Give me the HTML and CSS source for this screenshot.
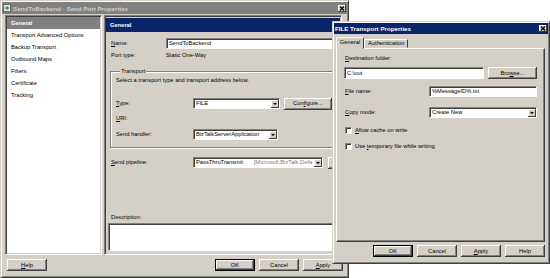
FILE: index.html
```html
<!DOCTYPE html>
<html lang="en">
<head>
    <meta charset="UTF-8">
    <meta name="viewport" content="width=device-width, initial-scale=1.0">
    <title>SendToBackend - Send Port Properties</title>
    <link rel="stylesheet" href="styles.css">
</head>
<body>
    <div class="win back">
        <div class="titlebar">
            <svg class="app-icon" width="8" height="8" viewBox="0 0 8 8">
                <rect x="0.5" y="0.5" width="7" height="7" fill="#e8e8e8" stroke="#6a6a6a"/>
                <path d="M1.5 4 H5 M3.5 2.5 L5.5 4 L3.5 5.5" stroke="#2e8b3a" stroke-width="1.2" fill="none"/>
            </svg>
            <span class="title">SendToBackend - Send Port Properties</span>
            <span class="close">
                <svg width="6" height="5" viewBox="0 0 6 5"><path d="M1 0.5 L5 4.5 M5 0.5 L1 4.5" stroke="#000" stroke-width="1.2"/></svg>
            </span>
        </div>
        <div class="main">
            <ul class="nav sunken">
                <li class="selected">General</li>
                <li>Transport Advanced Options</li>
                <li>Backup Transport</li>
                <li>Outbound Maps</li>
                <li>Filters</li>
                <li>Certificate</li>
                <li>Tracking</li>
            </ul>
            <div class="pane sunken">
                <div class="pane-head">General</div>
                <div class="form">
                    <div class="row name-row">
                        <span class="lbl w55"><u>N</u>ame:</span>
                        <div class="field name-field">SendToBackend</div>
                    </div>
                    <div class="row port-row">
                        <span class="lbl w55">Port type:</span>
                        <span>Static One-Way</span>
                    </div>
                    <fieldset class="group">
                        <legend>Transport</legend>
                        <p class="hint">Select a transport type and transport address below.</p>
                        <div class="row type-row">
                            <span class="lbl w77"><u>T</u>ype:</span>
                            <div class="field select type-select"><span>FILE</span><span class="arrow"></span></div>
                            <div class="btn configure">Con<u>f</u>igure...</div>
                        </div>
                        <div class="row uri-row">
                            <span class="lbl w77"><u>U</u>RI:</span>
                        </div>
                        <div class="row handler-row">
                            <span class="lbl w77">Send handler:</span>
                            <div class="field select handler-select"><span>BizTalkServerApplication</span><span class="arrow"></span></div>
                        </div>
                    </fieldset>
                    <div class="row pipeline-row">
                        <span class="lbl w82"><u>S</u>end pipeline:</span>
                        <div class="field select pipeline-select">
                            <span>PassThruTransmit</span>
                            <span class="muted">[Microsoft.BizTalk.Defa</span>
                            <span class="arrow"></span>
                        </div>
                        <div class="btn small"></div>
                    </div>
                    <div class="desc-label">Description:</div>
                    <div class="field desc"></div>
                </div>
            </div>
        </div>
        <div class="footer">
            <div class="btn"><u>H</u>elp</div>
            <div class="spacer"></div>
            <div class="btn default">OK</div>
            <div class="btn">Cancel</div>
            <div class="btn"><u>A</u>pply</div>
        </div>
    </div>

    <div class="win front">
        <div class="titlebar">
            <span class="title">FILE Transport Properties</span>
            <span class="close">
                <svg width="6" height="5" viewBox="0 0 6 5"><path d="M1 0.5 L5 4.5 M5 0.5 L1 4.5" stroke="#000" stroke-width="1.2"/></svg>
            </span>
        </div>
        <div class="tabs">
            <div class="tab active">General</div>
            <div class="tab">Authentication</div>
        </div>
        <div class="tab-panel">
            <div class="dest-label"><u>D</u>estination folder:</div>
            <div class="row dest-row">
                <div class="field dest-field">C:\out</div>
                <div class="btn browse">Bro<u>w</u>se...</div>
            </div>
            <div class="row file-row">
                <span class="lbl w84"><u>F</u>ile name:</span>
                <div class="field file-field">%MessageID%.txt</div>
            </div>
            <div class="row copy-row">
                <span class="lbl w84"><u>C</u>opy mode:</span>
                <div class="field select file-field"><span>Create New</span><span class="arrow"></span></div>
            </div>
            <div class="check-row first">
                <span class="check"></span>
                <span><u>A</u>llow cache on write</span>
            </div>
            <div class="check-row">
                <span class="check"></span>
                <span>Use <u>t</u>emporary file while writing</span>
            </div>
        </div>
        <div class="footer front-footer">
            <div class="btn default">OK</div>
            <div class="btn">Cancel</div>
            <div class="btn"><u>A</u>pply</div>
            <div class="btn">Help</div>
        </div>
    </div>
</body>
</html>
```

FILE: styles.css
```css
*{
    padding: 0;
    margin: 0;
    box-sizing: border-box;
}
body {
    width: 550px;
    height: 278px;
    overflow: hidden;
    position: relative;
    background: #fff;
    color: #000;
    font-family: "Liberation Sans", Arial, sans-serif;
    font-size: 5.75px;
    line-height: 7px;
}
u {
    text-decoration-thickness: 0.5px;
}

/* windows */
.win {
    position: absolute;
    display: flex;
    flex-direction: column;
    padding: 1px;
    background: #d4d0c8;
    border: 1px solid;
    border-color: #d4d0c8 #404040 #404040 #d4d0c8;
    box-shadow: inset 1px 1px #fff, inset -1px -1px #808080;
}
.back {
    left: 0;
    top: 0;
    width: 349px;
    height: 278px;
}
.front {
    left: 332px;
    top: 21px;
    width: 218px;
    height: 243px;
}
.titlebar {
    display: flex;
    align-items: center;
    gap: 2px;
    height: 12px;
    padding: 0 1px 0 1px;
    font-weight: bold;
    font-size: 6.2px;
}
.back .titlebar {
    background: #808080;
    color: #d4d0c8;
}
.front .titlebar {
    height: 11px;
    background: #0a246a;
    color: #fff;
}
.title {
    flex: 1;
    white-space: nowrap;
}
.close {
    width: 8px;
    height: 7px;
    display: flex;
    align-items: center;
    justify-content: center;
    background: #d4d0c8;
    box-shadow: inset -1px -1px #404040, inset 1px 1px #fff;
}

/* shared controls */
.sunken {
    border: 1px solid;
    border-color: #808080 #fff #fff #808080;
    box-shadow: inset 1px 1px #404040, inset -1px -1px #d4d0c8;
    padding: 1px;
}
.field {
    display: flex;
    align-items: center;
    height: 11px;
    padding-left: 2px;
    background: #fff;
    border: 1px solid;
    border-color: #808080 #fff #fff #808080;
    box-shadow: inset 1px 1px #404040;
    white-space: nowrap;
    overflow: hidden;
}
.select .arrow {
    margin-left: auto;
    width: 8px;
    align-self: stretch;
    margin-top: 1px;
    margin-bottom: 0;
    display: flex;
    align-items: center;
    justify-content: center;
    background: #d4d0c8;
    box-shadow: inset -1px -1px #404040, inset 1px 1px #fff;
    flex-shrink: 0;
}
.select .arrow::after {
    content: "";
    border-left: 2px solid transparent;
    border-right: 2px solid transparent;
    border-top: 2px solid #000;
}
.btn {
    display: flex;
    align-items: center;
    justify-content: center;
    width: 40px;
    height: 12px;
    background: #d4d0c8;
    box-shadow: inset -1px -1px #404040, inset 1px 1px #fff, inset -2px -2px #808080;
    white-space: nowrap;
}
.btn.default {
    border: 1px solid #000;
}
.row {
    display: flex;
    align-items: center;
    height: 11px;
}
.lbl {
    flex-shrink: 0;
    white-space: nowrap;
}
.w55 { width: 55px; }
.w77 { width: 77px; }
.w82 { width: 82px; }
.w84 { width: 84px; }

/* back window */
.main {
    display: flex;
    gap: 2px;
    margin-top: 1px;
    padding-left: 3px;
    height: 240px;
}
.nav {
    list-style: none;
    width: 97px;
    height: 240px;
    background: #fff;
}
.nav li {
    height: 12px;
    line-height: 12px;
    padding-left: 4px;
    white-space: nowrap;
}
.nav .selected {
    background: #808080;
    color: #fff;
    font-weight: bold;
}
.pane {
    width: 238px;
    height: 240px;
}
.pane-head {
    margin: 1px 0 0 0;
    height: 14px;
    line-height: 14px;
    padding-left: 4px;
    background: #0a246a;
    color: #fff;
    font-weight: bold;
}
.form {
    padding-left: 5px;
}
.name-row {
    margin-top: 6px;
}
.name-field {
    width: 175px;
}
.port-row {
    margin-top: 1px;
}
.group {
    margin: 7px 0 0 -1px;
    padding: 3px 0 7px 5px;
    width: 232px;
    border: 1px solid #808080;
    box-shadow: 1px 1px 0 #fff, inset 1px 1px 0 #fff;
}
.group legend {
    margin-left: 4px;
    padding: 0 1px;
    line-height: 6px;
    background: #d4d0c8;
}
.type-row {
    margin-top: 14px;
}
.type-select {
    width: 87px;
}
.configure {
    width: 48px;
    margin-left: 4px;
}
.uri-row {
    margin-top: 4px;
}
.handler-row {
    margin-top: 5px;
}
.handler-select {
    width: 85px;
}
.pipeline-row {
    margin-top: 9px;
}
.pipeline-select {
    width: 130px;
}
.muted {
    color: #808080;
    margin-left: 11px;
}
.btn.small {
    width: 12px;
    margin-left: 5px;
}
.desc-label {
    margin-top: 46px;
}
.desc {
    margin: 2px 0 0 -3px;
    width: 232px;
    height: 28px;
}
.footer {
    display: flex;
    gap: 4px;
    margin-top: 4px;
    padding: 0 4px 0 5px;
}
.spacer {
    flex: 1;
}

/* front window */
.tabs {
    display: flex;
    align-items: flex-end;
    height: 11px;
    margin: 3px 0 0 2px;
}
.tab {
    height: 9px;
    padding: 0 3px;
    display: flex;
    align-items: center;
    background: #d4d0c8;
    border: 1px solid;
    border-color: #fff #404040 transparent #fff;
    border-radius: 1px 1px 0 0;
}
.tab.active {
    position: relative;
    z-index: 1;
    height: 12px;
    width: 28px;
    margin-bottom: -1px;
    padding: 0 0 1px 0;
    justify-content: center;
}
.tab-panel {
    height: 194px;
    margin: 0 3px 0 2px;
    padding: 6px 0 0 8px;
    border: 1px solid;
    border-color: #fff #404040 #404040 #fff;
    box-shadow: inset -1px -1px #808080;
}
.dest-row {
    margin-top: 5px;
    height: 12px;
}
.dest-field {
    width: 140px;
    height: 12px;
    margin-left: -1px;
}
.browse {
    width: 49px;
    margin-left: 4px;
}
.file-row {
    margin-top: 7px;
}
.file-field {
    width: 108px;
}
.copy-row {
    margin-top: 10px;
}
.check-row {
    display: flex;
    align-items: center;
    gap: 3px;
    height: 7px;
    margin-top: 9px;
}
.check {
    width: 7px;
    height: 7px;
    background: #fff;
    border: 1px solid;
    border-color: #808080 #fff #fff #808080;
    box-shadow: inset 1px 1px #404040;
}
.front-footer {
    justify-content: flex-end;
    margin-top: 3px;
    padding: 0 3px 0 0;
}
```
